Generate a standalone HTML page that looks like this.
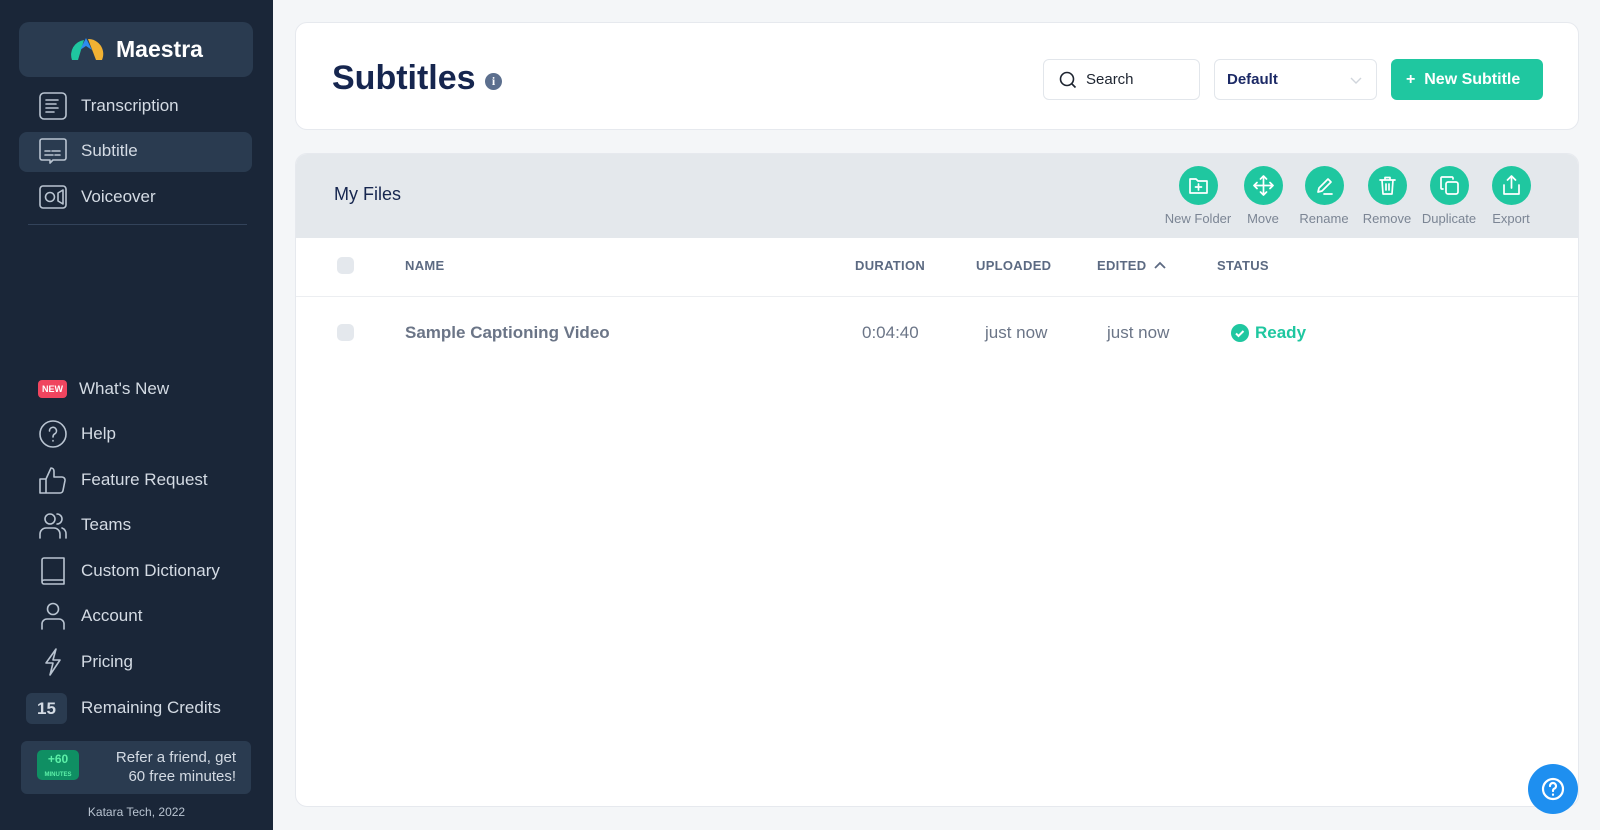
<!DOCTYPE html>
<html><head><meta charset="utf-8"><style>
*{box-sizing:border-box;margin:0;padding:0}
body{width:1600px;height:830px;overflow:hidden;background:#f4f6f8;font-family:"Liberation Sans",sans-serif;position:relative}
.sb{position:absolute;left:0;top:0;width:273px;height:830px;background:#1a2638}
.a{position:absolute}
.logo{left:19px;top:22px;width:234px;height:55px;background:#2a3b50;border-radius:10px;color:#fff;font-weight:bold;font-size:23px}
.nav{position:absolute;left:81px;color:#d4dbe4;font-size:17px;transform:translateY(-50%)}
.ic{position:absolute;left:38px;width:30px;height:30px;transform:translateY(-50%)}
.ic svg{width:30px;height:30px;fill:none;stroke:#b9c4d1;stroke-width:1.6;stroke-linecap:round;stroke-linejoin:round}
.card{position:absolute;background:#fff;border:1px solid #e6e9ee;border-radius:12px}
.th{position:absolute;top:258px;font-size:13px;font-weight:bold;color:#5c6a82;letter-spacing:.3px}
.td{position:absolute;top:323px;font-size:17px;color:#6b7587}
.cb{position:absolute;left:337px;width:17px;height:17px;border-radius:5px;background:#e4e8ed}
.circ{position:absolute;top:166px;width:39px;height:39px;border-radius:50%;background:#1fc7a0}
.circ svg{position:absolute;left:9px;top:9px;width:21px;height:21px;fill:none;stroke:#fff;stroke-width:1.7;stroke-linecap:round;stroke-linejoin:round}
.lab{position:absolute;top:211px;font-size:13px;color:#7b8594;width:80px;text-align:center}
</style></head><body>
<div class="sb">
 <div class="a logo">
  <svg class="a" style="left:51px;top:14px" width="34" height="26" viewBox="0 0 34 26"><path d="M2 24 A15 15 0 0 1 14 4 L8 24Z" fill="#1fc7a0"/><path d="M10 14 L16 2 L22 14 L16 10Z" fill="#2d8cf0"/><path d="M18 3 A15 15 0 0 1 32 24 L26 24Z" fill="#f2b233"/></svg>
  <span class="a" style="left:97px;top:14px">Maestra</span>
 </div>
 <div class="a" style="left:19px;top:132px;width:233px;height:40px;background:#2a3b50;border-radius:8px"></div>
 <div class="ic" style="top:106px"><svg viewBox="0 0 30 30"><rect x="2" y="2" width="26" height="26" rx="4"/><path d="M8 9h12M8 13h10M8 17h12M8 21h8"/></svg></div><div class="nav" style="top:106px">Transcription</div>
 <div class="ic" style="top:151px"><svg viewBox="0 0 30 30"><path d="M4 3h22a2 2 0 0 1 2 2v17a2 2 0 0 1-2 2H15l-3 3v-3H4a2 2 0 0 1-2-2V5a2 2 0 0 1 2-2z"/><path d="M7 15h5M14 15h8M7 19h8M17 19h5"/></svg></div><div class="nav" style="top:151px">Subtitle</div>
 <div class="ic" style="top:197px"><svg viewBox="0 0 30 30"><rect x="2" y="4" width="26" height="22" rx="3"/><circle cx="12" cy="15" r="4.5"/><path d="M20 11l5-3v14l-5-3z"/></svg></div><div class="nav" style="top:197px">Voiceover</div>
 <div class="a" style="left:28px;top:224px;width:219px;height:1px;background:#33435a"></div>
 <div class="a" style="left:38px;top:380px;width:29px;height:18px;background:#f0455f;border-radius:4px;color:#fff;font-size:9px;font-weight:bold;text-align:center;line-height:18px">NEW</div><div class="nav" style="top:389px;left:79px">What's New</div>
 <div class="ic" style="top:434px"><svg viewBox="0 0 30 30"><circle cx="15" cy="15" r="13"/><path d="M11.5 12a3.5 3.5 0 1 1 5 3c-1.3.7-1.5 1.5-1.5 3M15 21.5v.5"/></svg></div><div class="nav" style="top:434px">Help</div>
 <div class="ic" style="top:480px"><svg viewBox="0 0 30 30"><path d="M2 14h6v14H2zM8 14l5-11c2 0 3 1.5 3 3.5V12h8a3 3 0 0 1 3 3.5l-2 10A3 3 0 0 1 22 28H8"/></svg></div><div class="nav" style="top:480px">Feature Request</div>
 <div class="ic" style="top:525px"><svg viewBox="0 0 30 30"><circle cx="12" cy="9" r="5"/><path d="M2 28v-4a6 6 0 0 1 6-6h8a6 6 0 0 1 6 6v4M19 4a5 5 0 0 1 0 10M24 18a6 6 0 0 1 4 6v4"/></svg></div><div class="nav" style="top:525px">Teams</div>
 <div class="ic" style="top:571px"><svg viewBox="0 0 30 30"><path d="M4 4a2 2 0 0 1 2-2h20v22H6a2 2 0 0 0-2 2zM4 26a2 2 0 0 0 2 2h20v-4"/></svg></div><div class="nav" style="top:571px">Custom Dictionary</div>
 <div class="ic" style="top:616px"><svg viewBox="0 0 30 30"><circle cx="15" cy="8" r="5.5"/><path d="M4 28v-5a5 5 0 0 1 5-5h12a5 5 0 0 1 5 5v5"/></svg></div><div class="nav" style="top:616px">Account</div>
 <div class="ic" style="top:662px"><svg viewBox="0 0 30 30"><path d="M18 2L8 16h7l-3 12 10-15h-7z"/></svg></div><div class="nav" style="top:662px">Pricing</div>
 <div class="a" style="left:26px;top:693px;width:41px;height:31px;background:#2a3b50;border-radius:6px;color:#d4dbe4;font-weight:bold;font-size:17px;text-align:center;line-height:31px">15</div><div class="nav" style="top:708px">Remaining Credits</div>
 <div class="a" style="left:21px;top:741px;width:230px;height:53px;background:#2a3b50;border-radius:6px">
  <div class="a" style="left:16px;top:9px;width:42px;height:30px;background:#0f8f63;border-radius:5px;color:#5cf0a8;text-align:center;font-weight:bold;font-size:12px;line-height:13px;padding-top:3px">+60<br><span style="font-size:6px">MINUTES</span></div>
  <div class="a" style="right:15px;top:7px;color:#d4dbe4;font-size:15px;text-align:right;line-height:19px">Refer a friend, get<br>60 free minutes!</div>
 </div>
 <div class="a" style="left:0;width:273px;top:805px;text-align:center;color:#b9c4d1;font-size:12px">Katara Tech, 2022</div>
</div>

<div class="card" style="left:295px;top:22px;width:1284px;height:108px">
 <div class="a" style="left:36px;top:36px;font-size:34px;font-weight:bold;color:#16264f">Subtitles</div>
 <div class="a" style="left:189px;top:50px;width:17px;height:17px;border-radius:50%;background:#5c6f8e;color:#fff;font-size:12px;font-weight:bold;text-align:center;line-height:17px;font-family:'Liberation Serif',serif">i</div>
 <div class="a" style="left:747px;top:36px;width:157px;height:41px;border:1.5px solid #e2e6eb;border-radius:6px">
  <svg class="a" style="left:15px;top:11px" width="18" height="18" viewBox="0 0 18 18" fill="none" stroke="#1d2430" stroke-width="1.6"><circle cx="8" cy="8" r="6.5"/><path d="M13 13l3.5 3.5"/></svg>
  <span class="a" style="left:42px;top:11px;font-size:15px;color:#1d2430">Search</span></div>
 <div class="a" style="left:918px;top:36px;width:163px;height:41px;border:1.5px solid #e2e6eb;border-radius:6px">
  <span class="a" style="left:12px;top:11px;font-size:15px;font-weight:bold;color:#1c2a66">Default</span>
  <svg class="a" style="left:134px;top:15px" width="14" height="10" viewBox="0 0 14 10" fill="none" stroke="#d0d5dc" stroke-width="1.4"><path d="M2 3l5 5 5-5"/></svg></div>
 <div class="a" style="left:1095px;top:36px;width:152px;height:41px;background:#1fc7a0;border-radius:6px;color:#fff;font-weight:bold;font-size:16px;line-height:41px;padding-left:15px">+&nbsp;&nbsp;New Subtitle</div>
</div>

<div class="card" style="left:295px;top:153px;width:1284px;height:654px;overflow:hidden">
 <div class="a" style="left:0;top:0;width:1284px;height:84px;background:#e4e8ec"></div>
 <div class="a" style="left:38px;top:30px;font-size:18px;color:#16264f">My Files</div>
</div>
<div class="circ" style="left:1179px"><svg viewBox="0 0 21 21"><path d="M2 4h6l2 2h9v12H2z"/><path d="M10.5 9v6M7.5 12h6"/></svg></div>
<div class="circ" style="left:1244px"><svg viewBox="0 0 21 21"><path d="M10.5 1v19M1 10.5h19M7.5 4l3-3 3 3M7.5 17l3 3 3-3M4 7.5l-3 3 3 3M17 7.5l3 3-3 3"/></svg></div>
<div class="circ" style="left:1305px"><svg viewBox="0 0 21 21"><path d="M4 17l1-4L14 4l3 3-9 9zM10 19h8"/></svg></div>
<div class="circ" style="left:1368px"><svg viewBox="0 0 21 21"><path d="M3 5h15M8 5V2.5h5V5M5 5l1 14h9l1-14M9 9v6M12 9v6"/></svg></div>
<div class="circ" style="left:1430px"><svg viewBox="0 0 21 21"><rect x="7" y="7" width="12" height="12" rx="2"/><path d="M14 4V3a1 1 0 0 0-1-1H3a1 1 0 0 0-1 1v10a1 1 0 0 0 1 1h1"/></svg></div>
<div class="circ" style="left:1492px"><svg viewBox="0 0 21 21"><path d="M10.5 13V1M6.5 5l4-4 4 4M3 10v9h15v-9"/></svg></div>
<div class="lab" style="left:1158px">New Folder</div>
<div class="lab" style="left:1223px">Move</div>
<div class="lab" style="left:1284px">Rename</div>
<div class="lab" style="left:1347px">Remove</div>
<div class="lab" style="left:1409px">Duplicate</div>
<div class="lab" style="left:1471px">Export</div>

<div class="a" style="left:296px;top:296px;width:1282px;height:1px;background:#eceef1"></div>
<div class="cb" style="top:257px"></div>
<div class="th" style="left:405px">NAME</div>
<div class="th" style="left:855px">DURATION</div>
<div class="th" style="left:976px">UPLOADED</div>
<div class="th" style="left:1097px">EDITED</div>
<svg class="a" style="left:1153px;top:259px" width="14" height="12" viewBox="0 0 14 12" fill="none" stroke="#5c6a82" stroke-width="1.8"><path d="M2 9l5-5 5 5"/></svg>
<div class="th" style="left:1217px">STATUS</div>
<div class="cb" style="top:324px"></div>
<div class="td" style="left:405px;font-weight:bold;color:#6b7587">Sample Captioning Video</div>
<div class="td" style="left:862px">0:04:40</div>
<div class="td" style="left:985px">just now</div>
<div class="td" style="left:1107px">just now</div>
<div class="a" style="left:1231px;top:324px;width:18px;height:18px;border-radius:50%;background:#1fc7a0"><svg width="18" height="18" viewBox="0 0 18 18" fill="none" stroke="#fff" stroke-width="2"><path d="M5 9.5l2.5 2.5 5-5"/></svg></div>
<div class="td" style="left:1255px;color:#1fc7a0;font-weight:bold">Ready</div>

<div class="a" style="left:1528px;top:764px;width:50px;height:50px;border-radius:50%;background:#1e8ff0"><svg width="50" height="50" viewBox="0 0 50 50" fill="none" stroke="#fff" stroke-width="2.2" stroke-linecap="round"><circle cx="25" cy="25" r="10"/><path d="M22 22a3 3 0 1 1 4 2.8c-1 .5-1 1-1 2.2M25 30.5v.3"/></svg></div>
</body></html>
